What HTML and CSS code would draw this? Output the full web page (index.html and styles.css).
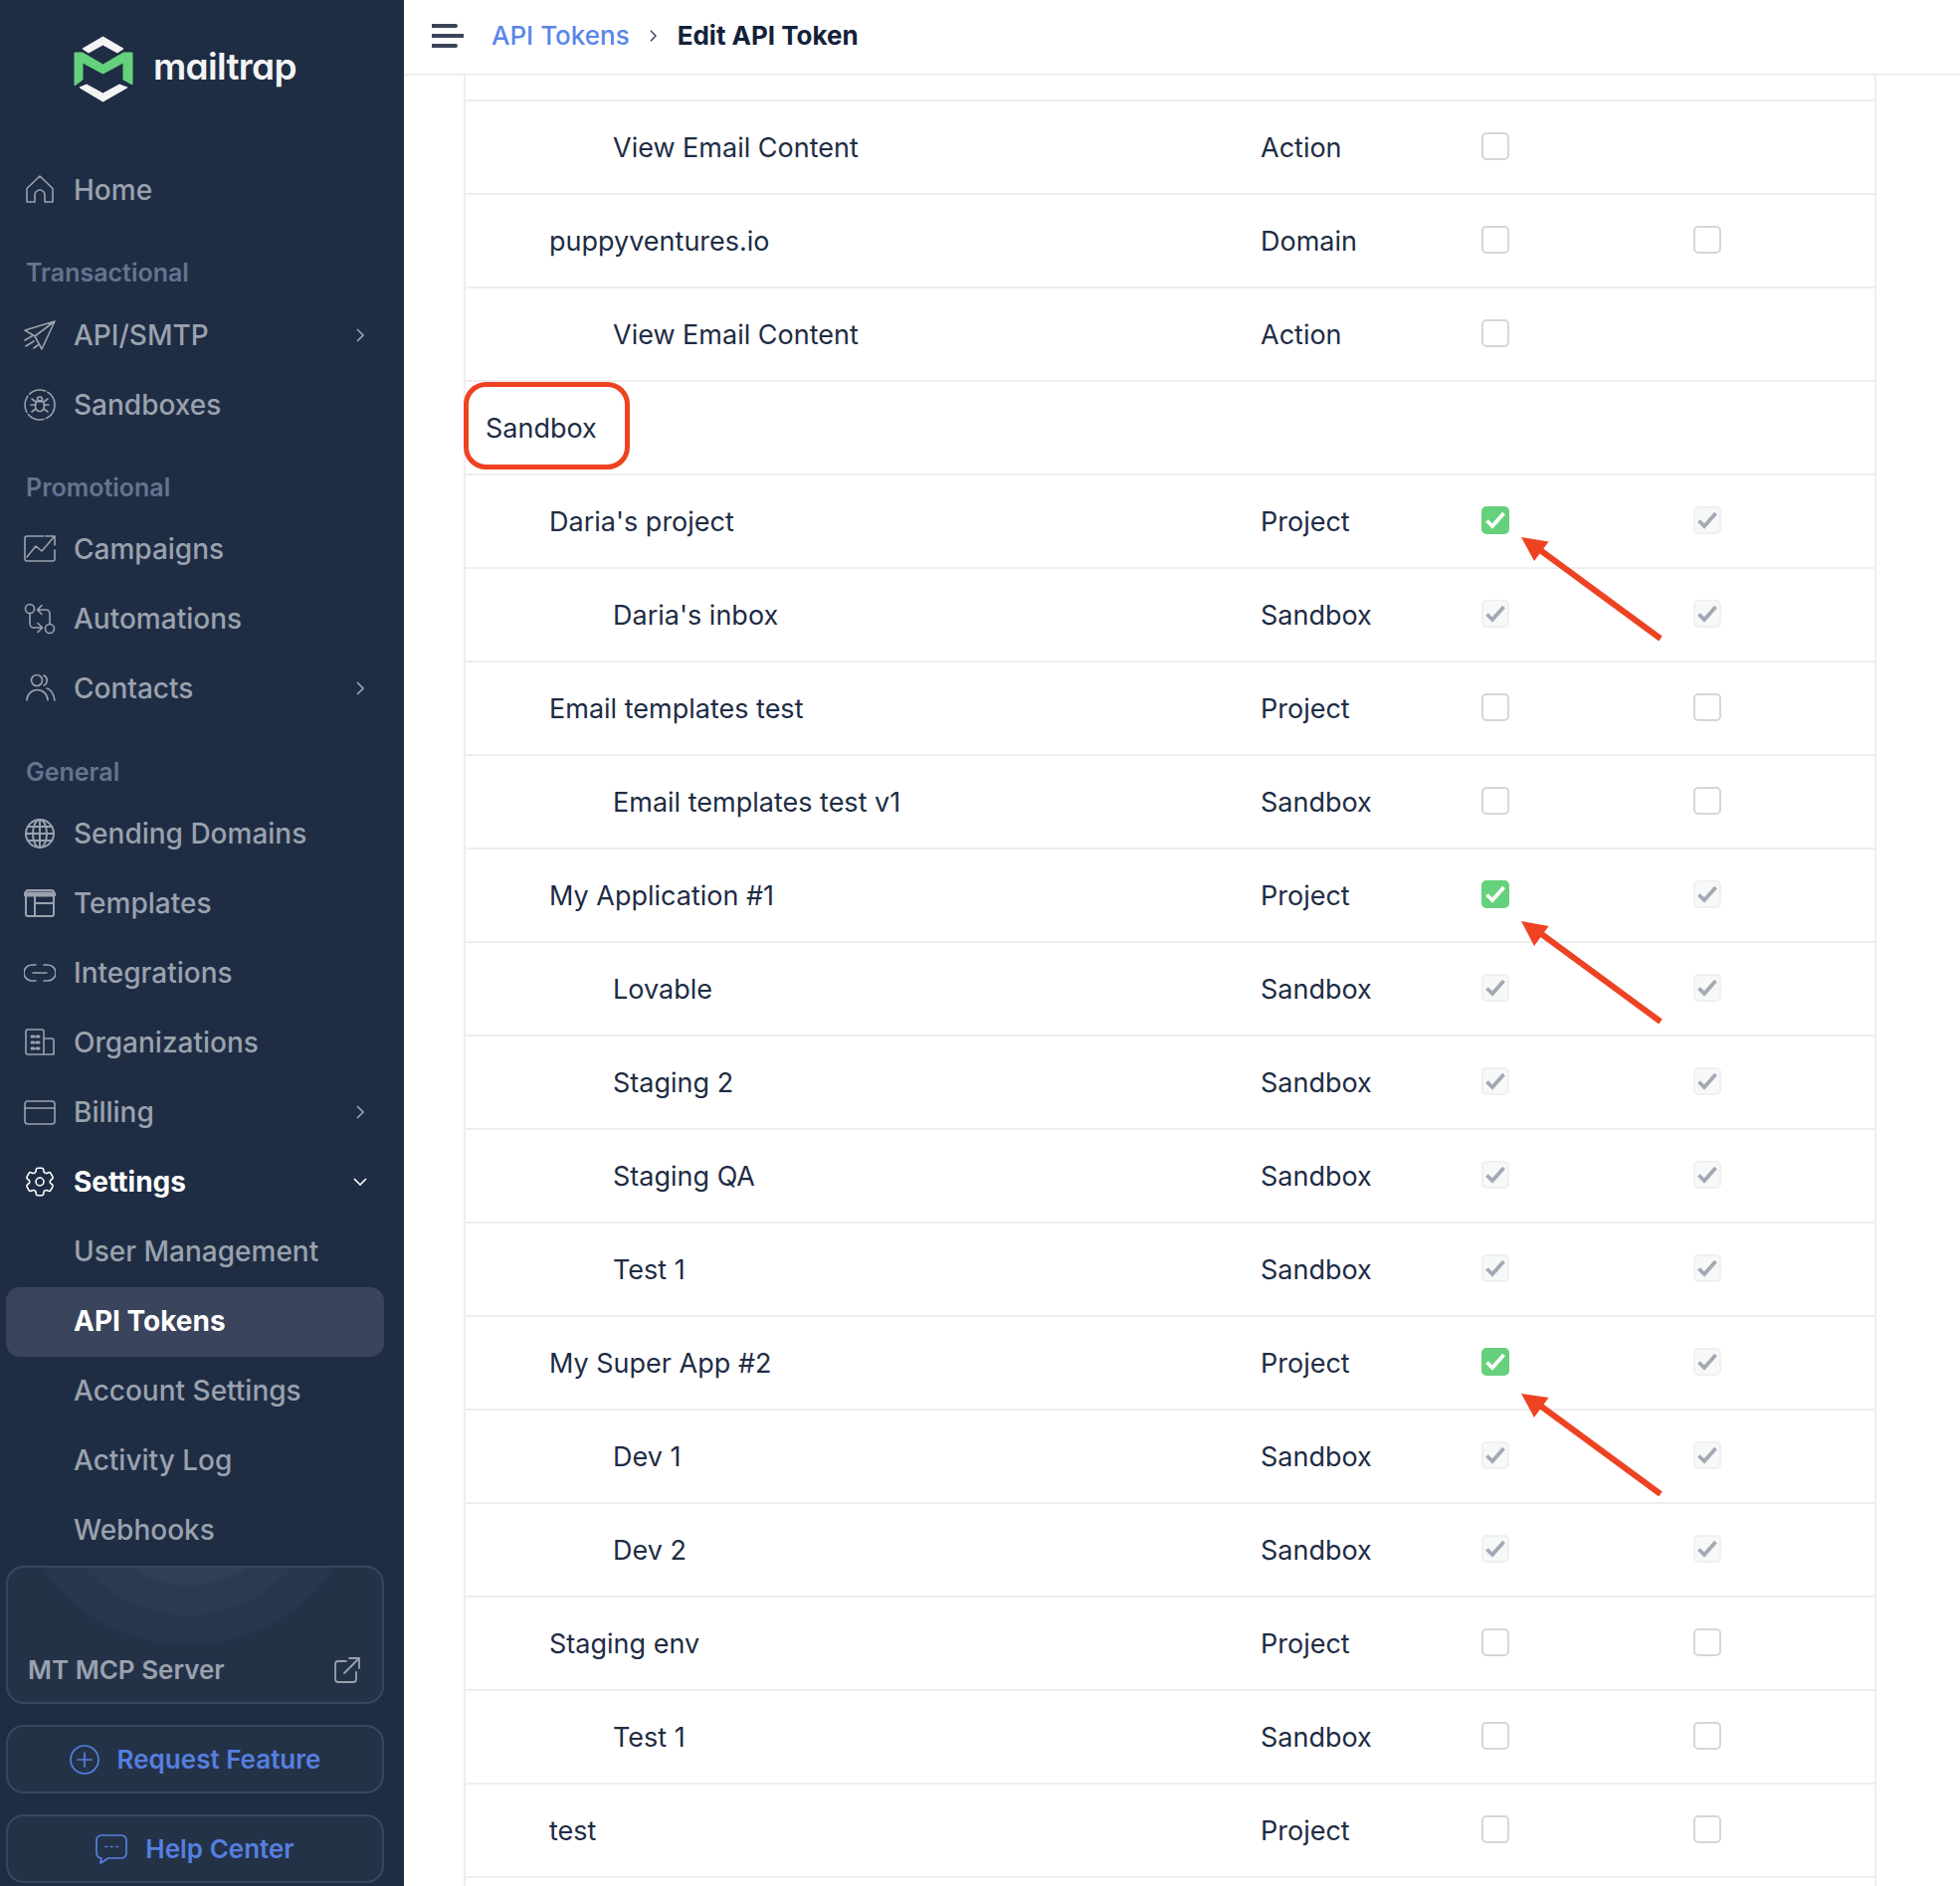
FILE: index.html
```html
<!DOCTYPE html>
<html lang="en">
<head>
<meta charset="utf-8">
<title>Edit API Token</title>
<link rel="stylesheet" href="styles.css">
</head>
<body>
<svg class="defs" width="0" height="0" aria-hidden="true">
  <symbol id="tick" viewBox="0 0 28 28"><path d="M5.500 14.500l5.500 5.500L22.500 7" fill="none" stroke="currentColor" stroke-width="3.800"/></symbol>
  <symbol id="chev" viewBox="0 0 8 14"><path d="M1 1l6 6-6 6" fill="none" stroke="currentColor" stroke-width="1.600"/></symbol>
</svg>
<div class="app">
  <aside class="sidebar">
    <div class="brand">
      <svg class="brand-mark" viewBox="0 0 60 68" width="60" height="68">
        <path d="M9 13L29.500 1 50 13 44 17 29.500 9 15 17z" fill="#f4f4f4" stroke="#f4f4f4" stroke-linejoin="round"/>
        <path d="M1 17H9L29.500 29 50 17H59V49L50 44V27L29.500 38 9 27V44L1 50z" fill="#66d17c" stroke="#66d17c" stroke-linejoin="round"/>
        <path d="M6 52L13 49 29.500 58 46 49 54 52 29.500 66z" fill="#f4f4f4" stroke="#f4f4f4" stroke-linejoin="round"/>
      </svg>
      <span class="brand-name">mailtrap</span>
    </div>
    <nav class="nav">
      <a class="item"><svg class="ico" viewBox="0 0 32 32"><path d="M3 28V14.500L16 2l13 12.500V28h-8v-7a5 5 0 0 0-10 0v7z"/></svg>Home</a>
      <div class="label">Transactional</div>
      <a class="item"><svg class="ico" viewBox="0 0 32 32"><path d="M31 2L1 11l10 6L31 2 18 30l-7-13M1 21l7-4M2 27l8-5M10 29l4-3"/></svg>API/SMTP<svg class="chev"><use href="#chev"/></svg></a>
      <a class="item"><svg class="ico" viewBox="0 0 32 32"><circle cx="16" cy="16" r="15" stroke-dasharray="17 2.600"/><ellipse cx="16" cy="17" rx="4.500" ry="5.500"/><circle cx="16" cy="10.500" r="2.500"/><path d="M7 16h5M20 16h5M8 10l4 3M24 10l-4 3M8 23l4-3M24 23l-4-3"/></svg>Sandboxes</a>
      <div class="label label-tight">Promotional</div>
      <a class="item"><svg class="ico" viewBox="0 0 32 32"><path d="M20 3H3a2 2 0 0 0-2 2v21a2 2 0 0 0 2 2h26a2 2 0 0 0 2-2V17M3 24l9-11 6 5L30 4M22 3h9v9"/></svg>Campaigns</a>
      <a class="item"><svg class="ico" viewBox="0 0 32 32"><circle cx="6" cy="6" r="4.500"/><circle cx="26" cy="26" r="4.500"/><path d="M6 10.500V21a4 4 0 0 0 4 4h8M14 20.500l4.500 4.500-4.500 4.500M26 21.500V11a4 4 0 0 0-4-4h-8M18 2.500L13.500 7l4.500 4.500"/></svg>Automations</a>
      <a class="item"><svg class="ico" viewBox="0 0 32 32"><circle cx="13" cy="8" r="5.500"/><path d="M3 28a10.500 10.500 0 0 1 21 0M20 3a5.500 5.500 0 0 1 0 10M23 16c4 1 7 6 8 12"/></svg>Contacts<svg class="chev"><use href="#chev"/></svg></a>
      <div class="label label-wide">General</div>
      <a class="item"><svg class="ico ico-strong" viewBox="0 0 32 32"><circle cx="16" cy="16" r="14"/><ellipse cx="16" cy="16" rx="7" ry="14"/><path d="M16 2v28M2 16h28M4 9h24M4 23h24"/></svg>Sending Domains</a>
      <a class="item"><svg class="ico ico-strong" viewBox="0 0 32 32"><rect x="2" y="3" width="28" height="26" rx="2"/><path d="M2 7h28" stroke-width="5"/><path d="M11 8v21M11 16h19"/></svg>Templates</a>
      <a class="item"><svg class="ico" viewBox="0 0 32 32"><path d="M12 8H8a8 8 0 0 0 0 16h4M20 8h4a8 8 0 0 1 0 16h-4M9 16h14"/></svg>Integrations</a>
      <a class="item"><svg class="ico" viewBox="0 0 32 32"><path d="M4 28a2 2 0 0 1-2-2V5a2 2 0 0 1 2-2h14a2 2 0 0 1 2 2v23zM20 12h8a2 2 0 0 1 2 2v14H20"/><path d="M8 10h2M13 10h2M8 16h2M13 16h2M8 22h2M13 22h2" stroke-width="3"/></svg>Organizations</a>
      <a class="item"><svg class="ico" viewBox="0 0 32 32"><rect x="1" y="5" width="30" height="23" rx="3"/><path d="M1 12h30"/></svg>Billing<svg class="chev"><use href="#chev"/></svg></a>
      <a class="item item-open"><svg class="ico ico-white" viewBox="1.500 1.500 21 21"><path d="M9.594 3.940c.09-.542.56-.94 1.110-.94h2.593c.55 0 1.020.398 1.110.94l.213 1.281c.063.374.313.686.645.870.074.04.147.083.22.127.325.196.72.257 1.075.124l1.217-.456a1.125 1.125 0 0 1 1.370.49l1.296 2.247a1.125 1.125 0 0 1-.26 1.431l-1.003.827c-.293.241-.438.613-.43.992a7.723 7.723 0 0 1 0 .255c-.008.378.137.75.43.991l1.004.827c.424.35.534.955.26 1.430l-1.298 2.247a1.125 1.125 0 0 1-1.369.491l-1.217-.456c-.355-.133-.75-.072-1.076.124a6.470 6.470 0 0 1-.22.128c-.331.183-.581.495-.644.869l-.213 1.281c-.09.543-.56.94-1.110.94h-2.594c-.55 0-1.019-.398-1.110-.94l-.213-1.281c-.062-.374-.312-.686-.644-.870a6.520 6.520 0 0 1-.22-.127c-.325-.196-.72-.257-1.076-.124l-1.217.456a1.125 1.125 0 0 1-1.369-.49l-1.297-2.247a1.125 1.125 0 0 1 .26-1.431l1.004-.827c.292-.24.437-.613.43-.991a6.932 6.932 0 0 1 0-.255c.007-.38-.138-.751-.43-.992l-1.004-.827a1.125 1.125 0 0 1-.26-1.430l1.297-2.247a1.125 1.125 0 0 1 1.370-.491l1.216.456c.356.133.751.072 1.076-.124.072-.044.146-.086.22-.128.332-.183.582-.495.644-.869l.214-1.280Z"/><circle cx="12" cy="12" r="2.600"/></svg>Settings<svg class="chev chev-down"><use href="#chev"/></svg></a>
      <a class="item sub">User Management</a>
      <a class="item sub active">API Tokens</a>
      <a class="item sub">Account Settings</a>
      <a class="item sub">Activity Log</a>
      <a class="item sub">Webhooks</a>
    </nav>
    <div class="foot">
      <a class="card">
        <svg class="card-art" viewBox="0 0 376 135" aria-hidden="true">
          <circle cx="181" cy="-101" r="179" fill="#27364d"/>
          <circle cx="181" cy="-89" r="137" fill="#2b3a51"/>
          <circle cx="181" cy="-86" r="104" fill="#303f56"/>
        </svg>
        <span class="card-title">MT MCP Server</span>
        <svg class="ext" viewBox="0 0 26 26"><path d="M12 4H4a3 3 0 0 0-3 3v15a3 3 0 0 0 3 3h15a3 3 0 0 0 3-3v-7M10 16L25 1M15 1h10v10"/></svg>
      </a>
      <a class="btn"><svg class="btn-ico" viewBox="0 0 30 30"><circle cx="15" cy="15" r="14"/><path d="M15 8v14M8 15h14"/></svg>Request Feature</a>
      <a class="btn"><svg class="btn-ico chat" viewBox="0 0 32 30"><path d="M6 1h20a5 5 0 0 1 5 5v13a5 5 0 0 1-5 5H13l-8 5 1-5a5 5 0 0 1-5-5V6a5 5 0 0 1 5-5z"/><path d="M10 12.500h1.500M15.500 12.500H17M21 12.500h1.500"/></svg>Help Center</a>
    </div>
  </aside>
  <main class="main">
    <header class="topbar">
      <svg class="burger" viewBox="0 0 32 24"><path d="M0 2h24M0 12h32M0 22h24"/></svg>
      <a class="crumb">API Tokens</a>
      <svg class="crumb-sep"><use href="#chev"/></svg>
      <span class="crumb-now">Edit API Token</span>
    </header>
    <div class="content">
      <div class="table">
        <div class="row row-cut"></div>
        <div class="row"><div class="name l2">View Email Content</div><div class="type">Action</div><span class="cb"></span></div>
        <div class="row"><div class="name l1">puppyventures.io</div><div class="type">Domain</div><span class="cb"></span><span class="cb"></span></div>
        <div class="row"><div class="name l2">View Email Content</div><div class="type">Action</div><span class="cb"></span></div>
        <div class="row"><div class="name l0">Sandbox</div></div>
        <div class="row"><div class="name l1">Daria's project</div><div class="type">Project</div><span class="cb on"><svg><use href="#tick"/></svg></span><span class="cb off"><svg><use href="#tick"/></svg></span></div>
        <div class="row"><div class="name l2">Daria's inbox</div><div class="type">Sandbox</div><span class="cb off"><svg><use href="#tick"/></svg></span><span class="cb off"><svg><use href="#tick"/></svg></span></div>
        <div class="row"><div class="name l1">Email templates test</div><div class="type">Project</div><span class="cb"></span><span class="cb"></span></div>
        <div class="row"><div class="name l2">Email templates test v1</div><div class="type">Sandbox</div><span class="cb"></span><span class="cb"></span></div>
        <div class="row"><div class="name l1">My Application #1</div><div class="type">Project</div><span class="cb on"><svg><use href="#tick"/></svg></span><span class="cb off"><svg><use href="#tick"/></svg></span></div>
        <div class="row"><div class="name l2">Lovable</div><div class="type">Sandbox</div><span class="cb off"><svg><use href="#tick"/></svg></span><span class="cb off"><svg><use href="#tick"/></svg></span></div>
        <div class="row"><div class="name l2">Staging 2</div><div class="type">Sandbox</div><span class="cb off"><svg><use href="#tick"/></svg></span><span class="cb off"><svg><use href="#tick"/></svg></span></div>
        <div class="row"><div class="name l2">Staging QA</div><div class="type">Sandbox</div><span class="cb off"><svg><use href="#tick"/></svg></span><span class="cb off"><svg><use href="#tick"/></svg></span></div>
        <div class="row"><div class="name l2">Test 1</div><div class="type">Sandbox</div><span class="cb off"><svg><use href="#tick"/></svg></span><span class="cb off"><svg><use href="#tick"/></svg></span></div>
        <div class="row"><div class="name l1">My Super App #2</div><div class="type">Project</div><span class="cb on"><svg><use href="#tick"/></svg></span><span class="cb off"><svg><use href="#tick"/></svg></span></div>
        <div class="row"><div class="name l2">Dev 1</div><div class="type">Sandbox</div><span class="cb off"><svg><use href="#tick"/></svg></span><span class="cb off"><svg><use href="#tick"/></svg></span></div>
        <div class="row"><div class="name l2">Dev 2</div><div class="type">Sandbox</div><span class="cb off"><svg><use href="#tick"/></svg></span><span class="cb off"><svg><use href="#tick"/></svg></span></div>
        <div class="row"><div class="name l1">Staging env</div><div class="type">Project</div><span class="cb"></span><span class="cb"></span></div>
        <div class="row"><div class="name l2">Test 1</div><div class="type">Sandbox</div><span class="cb"></span><span class="cb"></span></div>
        <div class="row"><div class="name l1">test</div><div class="type">Project</div><span class="cb"></span><span class="cb"></span></div>
        <div class="row"></div>
      </div>
    </div>
  </main>
  <svg class="marks" viewBox="0 0 1970 1896" aria-hidden="true">
    <rect class="mark-box" x="468.500" y="386.500" width="162" height="83" rx="20"/>
    <path class="mark-line" d="M1669 642L1548 553"/>
    <polygon class="mark-head" points="1529,540 1556.600,544.600 1542,564"/>
    <path class="mark-line" d="M1669 1027L1548 938"/>
    <polygon class="mark-head" points="1529,926 1556.600,931 1542,951"/>
    <path class="mark-line" d="M1669 1502L1548 1413"/>
    <polygon class="mark-head" points="1529,1401 1556.600,1405 1542,1425"/>
  </svg>
</div>
</body>
</html>
```

FILE: styles.css
```css
* { box-sizing: border-box; }
html, body { margin: 0; height: 100%; }
body { font-family: Inter, "Liberation Sans", sans-serif; color: #1e2c44; background: #fff; overflow: hidden; }
.defs { position: absolute; }
.app { position: relative; display: flex; width: 1970px; height: 1896px; overflow: hidden; }

/* sidebar */
.sidebar { flex: 0 0 406px; display: flex; flex-direction: column; background: #1f2d44; color: #9aa2ae; }
.brand { flex: 0 0 156px; display: flex; align-items: flex-start; padding: 36px 0 0 74px; gap: 20px; }
.brand-mark { flex: none; }
.brand-name { font-family: Inter, sans-serif; font-feature-settings: "cv11"; font-weight: 600; font-size: 37px; line-height: 46px; letter-spacing: -0.700px; margin-top: 8px; color: #f4f4f4; }
.nav { display: flex; flex-direction: column; }
.item { display: flex; align-items: center; height: 70px; margin: 0 20px 0 6px; padding: 0 20px 0 18px; border-radius: 14px; font-size: 28px; font-weight: 500; }
.ico { flex: none; width: 32px; height: 32px; margin-right: 18px; fill: none; stroke: #9aa2ae; stroke-width: 1.600; stroke-linecap: round; stroke-linejoin: round; }
.ico-strong { stroke-width: 2; }
.ico-white { stroke: #fff; stroke-width: 1.050; }
.chev { flex: none; width: 8px; height: 14px; margin-left: auto; color: #9aa2ae; }
.chev-down { transform: rotate(90deg); color: #fff; }
.item-open { color: #fff; font-weight: 700; }
.sub { padding-left: 68px; }
.active { margin-top: 1px; margin-bottom: -1px; padding-bottom: 2px; background: #3a445c; color: #fff; font-weight: 700; }
.label { height: 76px; padding: 30px 0 0 26px; font-size: 25px; line-height: 36px; font-weight: 600; color: #64748f; }
.label-tight { height: 75px; }
.label-wide { padding-top: 31px; }
.foot { display: flex; flex-direction: column; gap: 21px; margin: auto 20px 3px 6px; }
.card { position: relative; display: flex; align-items: flex-end; justify-content: space-between; height: 139px; padding: 0 22px 16px 20px; border: 2px solid #3a4560; border-radius: 18px; background: #243248; overflow: hidden; font-size: 26px; font-weight: 600; }
.card-art { position: absolute; left: 0; top: 0; width: 376px; height: 135px; }
.card-title { position: relative; line-height: 32px; }
.ext { position: relative; width: 26px; height: 26px; margin-bottom: 3px; fill: none; stroke: #9aa2ae; stroke-width: 1.800; stroke-linecap: round; stroke-linejoin: round; }
.btn { display: flex; align-items: center; justify-content: center; gap: 18px; height: 69px; border: 2px solid #3a4560; border-radius: 18px; background: #243248; color: #5580e0; font-size: 26px; font-weight: 600; }
.btn-ico { flex: none; width: 30px; height: 30px; fill: none; stroke: #5580e0; stroke-width: 1.700; stroke-linecap: round; stroke-linejoin: round; }
.chat { width: 32px; }

/* main */
.main { flex: 1; min-width: 0; display: flex; flex-direction: column; }
.topbar { flex: 0 0 76px; display: flex; align-items: center; padding: 0 0 3px 28px; border-bottom: 2px solid #eee; background: #fff; }
.burger { flex: none; width: 32px; height: 24px; margin-right: 28px; fill: none; stroke: #3b4559; stroke-width: 4; stroke-linecap: round; }
.crumb { color: #5a86e8; font-size: 26px; font-weight: 500; }
.crumb-sep { flex: none; width: 7px; height: 12px; margin: 0 21px 0 20px; color: #333d50; }
.crumb-now { color: #14213a; font-size: 26px; font-weight: 700; }
.content { flex: 1; min-height: 0; overflow: hidden; padding: 0 84px 0 60px; }
.table { border-left: 2px solid #eee; border-right: 2px solid #eee; }
.row { display: grid; grid-template-columns: 799px 222px 213px 28px; align-items: center; height: 94px; border-bottom: 2px solid #eee; font-size: 27px; }
.row-cut { height: 26px; }
.l0 { padding-left: 20px; }
.l1 { padding-left: 84px; }
.l2 { padding-left: 148px; }
.cb { display: block; width: 28px; height: 28px; margin-top: -2px; border: 2px solid #d6d6da; border-radius: 5px; background: #fff; }
.cb svg { display: block; width: 28px; height: 28px; margin: -2px; }
.on { border-color: #66d17c; background: #66d17c; color: #fff; }
.off { border-color: #eef0f1; background: #f7f8f8; color: #a3a9b4; }

/* annotations */
.marks { position: absolute; left: 0; top: 0; width: 1970px; height: 1896px; pointer-events: none; }
.mark-box { fill: none; stroke: #ee4323; stroke-width: 5; }
.mark-line { fill: none; stroke: #ee4323; stroke-width: 6; }
.mark-head { fill: #ee4323; }
```
